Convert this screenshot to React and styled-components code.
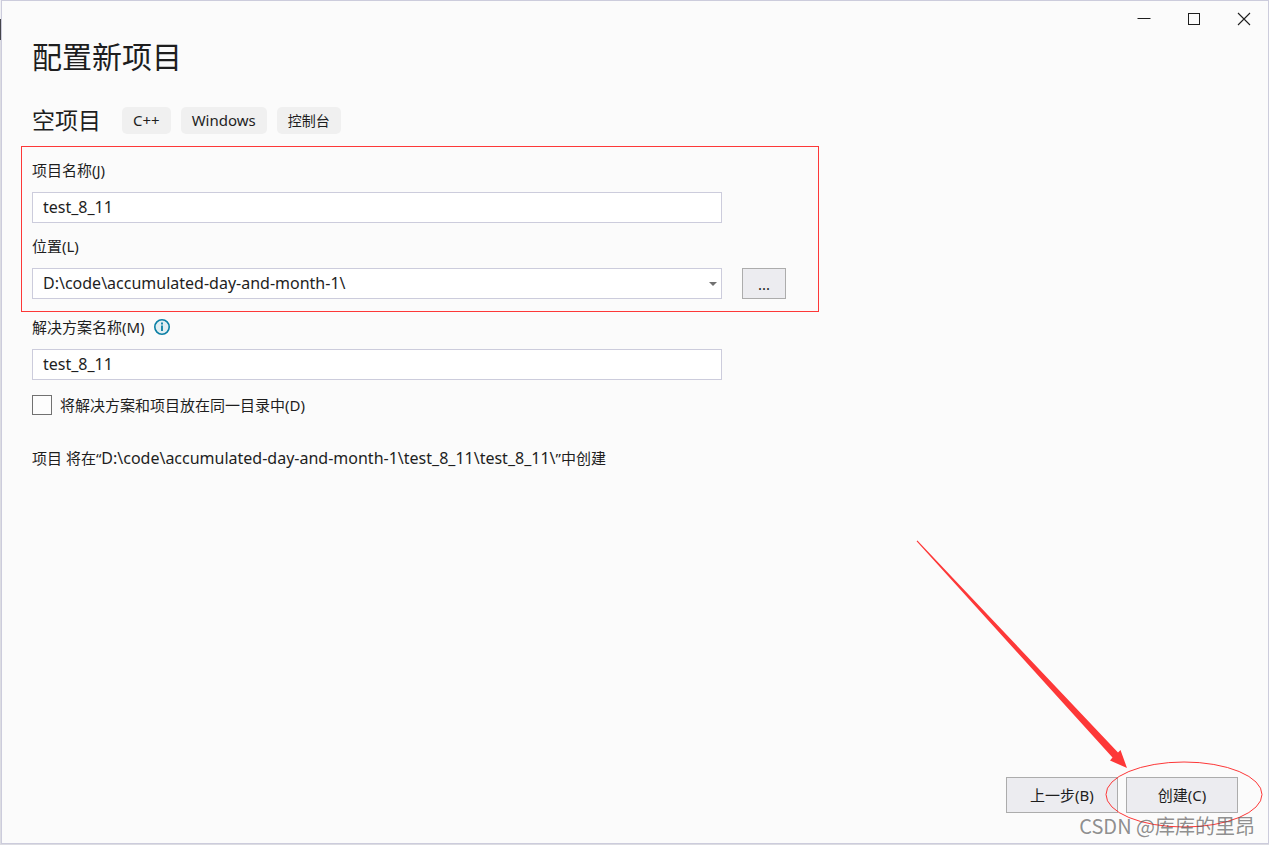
import { useState } from 'react';
import styled, { createGlobalStyle } from 'styled-components';

export default function App() {
  const [projectName, setProjectName] = useState('test_8_11');
  const [solutionName, setSolutionName] = useState('test_8_11');
  const [location, setLocation] = useState('D:\\code\\accumulated-day-and-month-1\\');
  const [sameFolder, setSameFolder] = useState(false);

  return (
    <Desktop>
      <GlobalStyle />
      <Window>
        <TitleBar>
          <WindowButton aria-label='最小化'>
            <svg width='16' height='14' viewBox='0 0 16 14'>
              <path d='M2.5 6.5h13' stroke='#1e1e1e' />
            </svg>
          </WindowButton>
          <WindowButton aria-label='最大化'>
            <svg width='16' height='14' viewBox='0 0 16 14' fill='none'>
              <rect x='3.5' y='1.5' width='11' height='11' stroke='#1e1e1e' />
            </svg>
          </WindowButton>
          <WindowButton aria-label='关闭'>
            <svg width='16' height='14' viewBox='0 0 16 14'>
              <path d='M3 1l12 12M15 1L3 13' stroke='#1e1e1e' strokeWidth='1.1' />
            </svg>
          </WindowButton>
        </TitleBar>

        <Content>
          <Title>配置新项目</Title>

          <Template>
            <TemplateName>空项目</TemplateName>
            <Tag>C++</Tag>
            <Tag>Windows</Tag>
            <Tag $small>控制台</Tag>
          </Template>

          <Marked>
            <Field>
              <Label htmlFor='project'>项目名称(J)</Label>
              <TextBox
                id='project'
                value={projectName}
                onChange={e => setProjectName(e.target.value)}
              />
            </Field>
            <Field>
              <Label htmlFor='location'>位置(L)</Label>
              <LocationRow>
                <Combo>
                  <Select
                    id='location'
                    value={location}
                    onChange={e => setLocation(e.target.value)}
                  >
                    <option>{location}</option>
                  </Select>
                  <Caret width='8' height='4' viewBox='0 0 8 4'>
                    <path d='M0 0h8L4 4z' fill='#717171' />
                  </Caret>
                </Combo>
                <BrowseButton>...</BrowseButton>
              </LocationRow>
            </Field>
          </Marked>

          <Field>
            <LabelRow>
              <Label htmlFor='solution'>解决方案名称(M)</Label>
              <svg width='16' height='16' viewBox='0 0 16 16'>
                <circle cx='8' cy='8' r='7.2' fill='#e1eef2' stroke='#0b7fa5' strokeWidth='1.6' />
                <path d='M7.1 3.6h1.8v1.8H7.1zM7.1 6.6h1.8v5.4H7.1z' fill='#0b7fa5' />
              </svg>
            </LabelRow>
            <TextBox
              id='solution'
              value={solutionName}
              onChange={e => setSolutionName(e.target.value)}
            />
          </Field>

          <CheckRow>
            <CheckBox
              type='checkbox'
              checked={sameFolder}
              onChange={e => setSameFolder(e.target.checked)}
            />
            将解决方案和项目放在同一目录中(D)
          </CheckRow>

          <Summary>
            项目 将在“<Path>{location}{solutionName}\{projectName}\</Path>”中创建
          </Summary>
        </Content>

        <Footer>
          <FooterButton>上一步(B)</FooterButton>
          <FooterButton>创建(C)</FooterButton>
        </Footer>
      </Window>

      <Annotation width='353' height='305' viewBox='0 0 353 305' fill='none'>
        <path
          d='M0.6 1.2L1.4 0.4L202 212.5L204.5 210L211 228L194 220.5L196.5 217.5Z'
          fill='#fd3838'
        />
        <ellipse cx='268' cy='254.5' rx='78' ry='32.5' stroke='#fd3838' />
      </Annotation>
      <Watermark>CSDN @库库的里昂</Watermark>
    </Desktop>
  );
}

const GlobalStyle = createGlobalStyle`
  * {
    box-sizing: border-box;
  }

  body {
    margin: 0;
    color: #1e1e1e;
    font-family: 'Noto Sans', 'Noto Sans CJK SC', sans-serif;
    font-size: 15px;
    line-height: 20px;
  }

  button,
  input,
  select {
    color: inherit;
    font: inherit;
  }
`;

// the dark stretch is the edge of the window behind
const Desktop = styled.div`
  position: relative;
  display: flex;
  min-height: 100vh;
  padding: 0 0 1px 1px;
  overflow: hidden;
  background: linear-gradient(#f0f0f4 19px, #44444a 19px 40px, #dcdce2 40px);
`;

const Window = styled.main`
  display: flex;
  flex: 1;
  flex-direction: column;
  min-width: 0;
  border: 1px solid #ccccdc;
  background: #fbfbfb;
`;

const TitleBar = styled.header`
  display: flex;
  justify-content: flex-end;
  height: 36px;
`;

const WindowButton = styled.button`
  display: grid;
  place-items: center;
  width: 50px;
  padding: 0;
  border: none;
  background: none;
`;

const Content = styled.div`
  flex: 1;
  padding: 0 20px 0 30px;
`;

const Title = styled.h1`
  margin: 0;
  font-size: 30px;
  font-weight: 400;
  line-height: 40px;
`;

const Template = styled.div`
  display: flex;
  align-items: center;
  gap: 10px;
  margin-top: 30px;
`;

const TemplateName = styled.h2`
  margin: 0 11px 0 0;
  font-size: 23px;
  font-weight: 400;
  line-height: 27px;
`;

const Tag = styled.span`
  padding: 0 11px;
  border-radius: 5px;
  background: #f0f0f0;
  font-size: ${({ $small }) => ($small ? 14 : 15)}px;
  line-height: 27px;
`;

// red frame drawn round the first two fields
const Marked = styled.section`
  max-width: 798px;
  margin: 12px 0 5px -11px;
  padding: 0 10px 12px;
  border: 1px solid #fd3838;
`;

const Field = styled.div`
  display: flex;
  flex-direction: column;
  gap: 12px;
  max-width: 754px;
  margin-top: 13px;

  ${Marked} + & {
    margin-top: 0;
  }
`;

const Label = styled.label`
  line-height: 20px;
`;

const LabelRow = styled.div`
  display: flex;
  align-items: center;
  gap: 9px;
`;

const TextBox = styled.input`
  width: 100%;
  max-width: 690px;
  height: 31px;
  padding: 0 10px 2px;
  border: 1px solid #ccccdc;
  background: white;

  && {
    font-size: 16px;
  }
`;

const LocationRow = styled.div`
  display: flex;
  gap: 20px;
`;

const Combo = styled.div`
  position: relative;
  flex: 1;
  max-width: 690px;
`;

const Select = styled.select`
  width: 100%;
  height: 31px;
  padding: 0 24px 2px 10px;
  border: 1px solid #ccccdc;
  border-radius: 0;
  background: white;
  appearance: none;

  && {
    font-size: 16px;
  }
`;

const Caret = styled.svg`
  position: absolute;
  top: 14px;
  right: 5px;
  pointer-events: none;
`;

const Button = styled.button`
  padding: 0;
  border: 1px solid #acacac;
  background: #ececf0;
`;

const BrowseButton = styled(Button)`
  width: 44px;
  height: 31px;
`;

const CheckRow = styled.label`
  display: flex;
  align-items: center;
  gap: 8px;
  margin-top: 15px;
`;

const CheckBox = styled.input`
  width: 20px;
  height: 20px;
  margin: 0;
  border: 1px solid #717171;
  background: #fdfdfd;
  appearance: none;

  &:checked {
    background: #717171;
  }
`;

const Summary = styled.p`
  margin: 33px 0 0;
`;

const Path = styled.span`
  font-size: 16px;
`;

const Footer = styled.footer`
  display: flex;
  justify-content: flex-end;
  gap: 8px;
  padding: 0 30px 30px;
`;

const FooterButton = styled(Button)`
  width: 112px;
  height: 36px;
`;

const Annotation = styled.svg`
  position: absolute;
  right: 0;
  bottom: 0;
  pointer-events: none;
`;

const Watermark = styled.div`
  position: absolute;
  right: 14px;
  bottom: 7px;
  color: rgba(80, 80, 80, 0.65);
  font-family: 'Noto Sans CJK SC', sans-serif;
  font-size: 20px;
  line-height: 24px;
`;
